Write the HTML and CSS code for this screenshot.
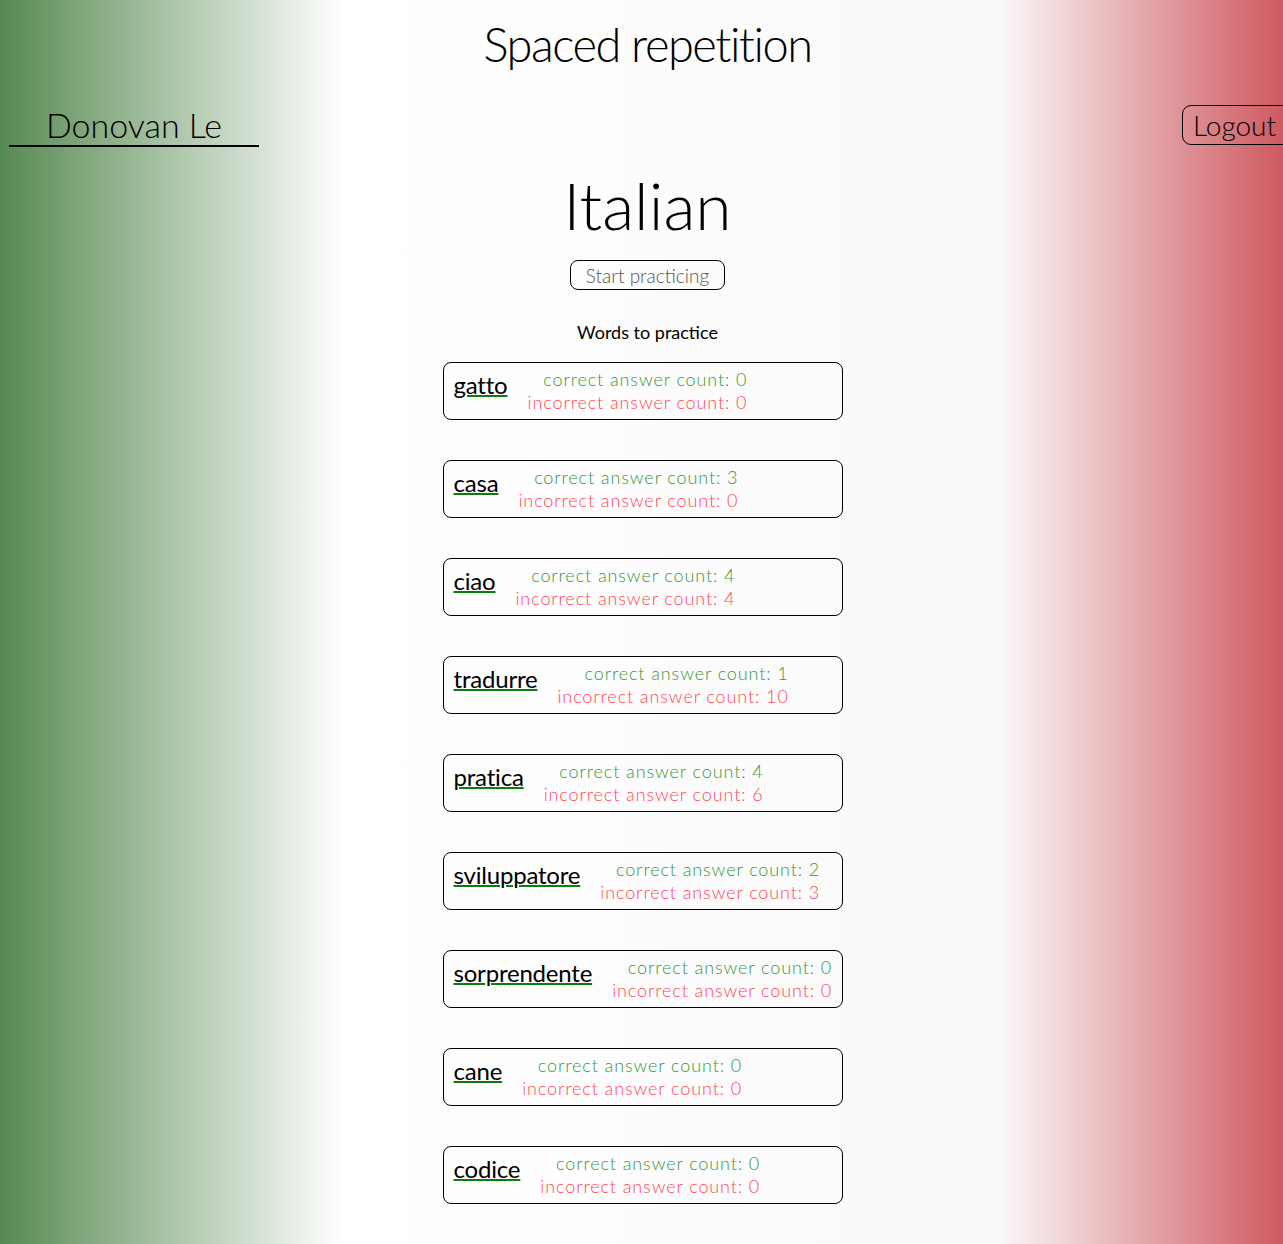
FILE: index.html
```html
<!DOCTYPE html>
<html lang="en">
<head>
<meta charset="utf-8">
<title>Spaced repetition</title>
<link rel="stylesheet" href="styles.css">
</head>
<body>
<header class="site-header">
  <h1 class="site-title">Spaced repetition</h1>
  <nav class="user-bar">
    <span class="user-name">Donovan Le</span>
    <button class="logout" type="button">Logout</button>
  </nav>
</header>
<main class="dashboard">
  <h2 class="language">Italian</h2>
  <button class="start" type="button">Start practicing</button>
  <h3 class="words-title">Words to practice</h3>
  <ul class="words">
    <li class="word-card"><a class="word" href="#">gatto</a><div class="counts"><p class="correct">correct answer count: 0</p><p class="incorrect">incorrect answer count: 0</p></div></li>
    <li class="word-card"><a class="word" href="#">casa</a><div class="counts"><p class="correct">correct answer count: 3</p><p class="incorrect">incorrect answer count: 0</p></div></li>
    <li class="word-card"><a class="word" href="#">ciao</a><div class="counts"><p class="correct">correct answer count: 4</p><p class="incorrect">incorrect answer count: 4</p></div></li>
    <li class="word-card"><a class="word" href="#">tradurre</a><div class="counts"><p class="correct">correct answer count: 1</p><p class="incorrect">incorrect answer count: 10</p></div></li>
    <li class="word-card"><a class="word" href="#">pratica</a><div class="counts"><p class="correct">correct answer count: 4</p><p class="incorrect">incorrect answer count: 6</p></div></li>
    <li class="word-card"><a class="word" href="#">sviluppatore</a><div class="counts"><p class="correct">correct answer count: 2</p><p class="incorrect">incorrect answer count: 3</p></div></li>
    <li class="word-card"><a class="word" href="#">sorprendente</a><div class="counts"><p class="correct">correct answer count: 0</p><p class="incorrect">incorrect answer count: 0</p></div></li>
    <li class="word-card"><a class="word" href="#">cane</a><div class="counts"><p class="correct">correct answer count: 0</p><p class="incorrect">incorrect answer count: 0</p></div></li>
    <li class="word-card"><a class="word" href="#">codice</a><div class="counts"><p class="correct">correct answer count: 0</p><p class="incorrect">incorrect answer count: 0</p></div></li>
  </ul>
</main>
</body>
</html>
```
FILE: styles.css
```css
html {
  overflow-x: hidden;
  background: #fafafa;
}

body {
  margin: 0;
  width: 1295px;
  min-height: 1244px;
  background: linear-gradient(to right, #578a52 0%, #ffffff 26.5%, #fafafa 66%, #fafafa 77%, #cf5a61 99%);
  font-family: Lato, "Noto Sans", sans-serif;
  font-weight: 300;
  color: #000;
}

.site-header {
  display: flex;
  flex-direction: column;
}

.site-title {
  margin: 0;
  padding-top: 15px;
  text-align: center;
  font-size: 47px;
  font-weight: 300;
  letter-spacing: -1.5px;
  line-height: 58px;
}

.user-bar {
  display: flex;
  justify-content: space-between;
  align-items: flex-start;
  margin-top: 32px;
}

.user-name {
  width: 250px;
  margin-left: 9px;
  text-align: center;
  font-size: 34px;
  line-height: 40px;
  border-bottom: 2px solid #000;
}

.logout {
  padding: 0 10px;
  height: 40px;
  width: 113px;
  font-family: inherit;
  font-weight: 300;
  font-size: 28px;
  color: #000;
  background: transparent;
  border: 1px solid #000;
  border-radius: 9px;
  text-align: left;
}

.dashboard {
  display: flex;
  flex-direction: column;
  align-items: center;
}

.language {
  margin: 18px 0 0;
  font-size: 66px;
  font-weight: 300;
  line-height: 80px;
}

.start {
  margin-top: 15px;
  padding: 0 15px;
  height: 30px;
  font-family: inherit;
  font-weight: 300;
  font-size: 19px;
  color: #555;
  background: transparent;
  border: 1px solid #000;
  border-radius: 8px;
}

.words-title {
  margin: 30px 0 0;
  font-size: 18px;
  font-weight: 400;
  line-height: 24px;
}

.words {
  list-style: none;
  margin: 18px 0 0;
  padding: 0;
  display: flex;
  flex-direction: column;
  gap: 40px;
  transform: translateX(-5px);
}

.word-card {
  box-sizing: border-box;
  width: 400px;
  height: 58px;
  display: flex;
  align-items: flex-start;
  gap: 20px;
  padding: 5px 10px;
  border: 1px solid #000;
  border-radius: 8px;
}

.word {
  margin-top: 2px;
  font-size: 24px;
  font-weight: 400;
  line-height: 30px;
  letter-spacing: -0.2px;
  color: #000;
  text-decoration: underline;
  text-decoration-color: #0a7d0a;
  text-decoration-thickness: 2px;
  white-space: nowrap;
}

.counts {
  flex-shrink: 0;
  text-align: right;
  white-space: nowrap;
}

.counts p {
  margin: 0;
  font-size: 18px;
  line-height: 23px;
  letter-spacing: 0.9px;
}

.correct {
  color: #379837;
}

.incorrect {
  color: #ff4757;
}
```
